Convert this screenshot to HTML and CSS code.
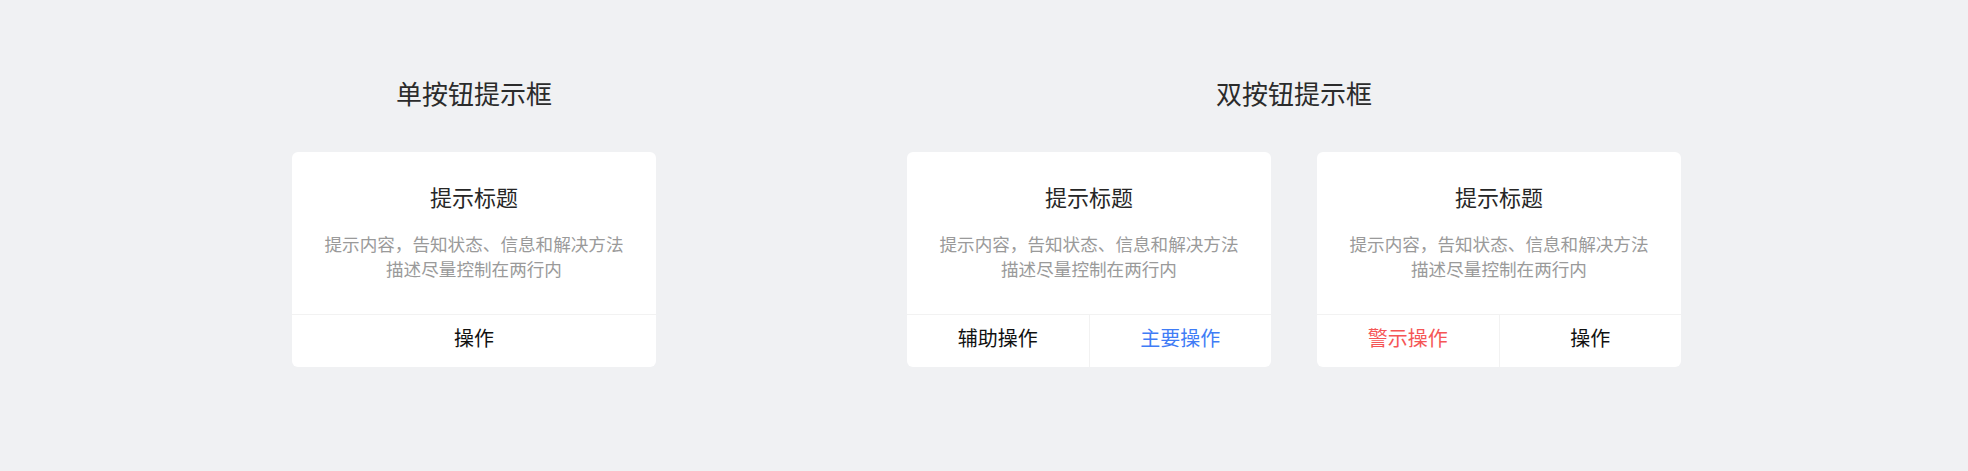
FILE: index.html
```html
<!DOCTYPE html>
<html lang="zh-CN">
<head>
<meta charset="utf-8">
<title>提示框</title>
<link rel="stylesheet" href="styles.css">
</head>
<body>
<main class="page">
  <section class="group">
    <h2 class="group-title">单按钮提示框</h2>
    <div class="cards">
      <div class="dialog">
        <div class="dialog-body">
          <div class="dialog-title">提示标题</div>
          <div class="dialog-desc">提示内容，告知状态、信息和解决方法<br>描述尽量控制在两行内</div>
        </div>
        <div class="dialog-actions">
          <div class="btn">操作</div>
        </div>
      </div>
    </div>
  </section>
  <section class="group">
    <h2 class="group-title">双按钮提示框</h2>
    <div class="cards">
      <div class="dialog">
        <div class="dialog-body">
          <div class="dialog-title">提示标题</div>
          <div class="dialog-desc">提示内容，告知状态、信息和解决方法<br>描述尽量控制在两行内</div>
        </div>
        <div class="dialog-actions">
          <div class="btn">辅助操作</div>
          <div class="btn btn-primary">主要操作</div>
        </div>
      </div>
      <div class="dialog">
        <div class="dialog-body">
          <div class="dialog-title">提示标题</div>
          <div class="dialog-desc">提示内容，告知状态、信息和解决方法<br>描述尽量控制在两行内</div>
        </div>
        <div class="dialog-actions">
          <div class="btn btn-danger">警示操作</div>
          <div class="btn">操作</div>
        </div>
      </div>
    </div>
  </section>
</main>
</body>
</html>
```
FILE: styles.css
```css
* { box-sizing: border-box; }
html, body {
  margin: 0;
  padding: 0;
  background: #f0f1f3;
  font-family: "Noto Sans CJK SC", "Noto Sans", sans-serif;
  text-spacing-trim: space-all;
}
.page {
  display: flex;
  align-items: flex-start;
  gap: 251px;
  padding: 75px 0 0 292px;
  width: 1968px;
  height: 471px;
}
.group {
  display: flex;
  flex-direction: column;
  align-items: center;
}
.group-title {
  margin: 0 0 41px;
  font-size: 26px;
  line-height: 36px;
  font-weight: 400;
  color: #2b2b2b;
}
.cards {
  display: flex;
  gap: 46px;
}
.dialog {
  width: 364px;
  height: 215px;
  background: #fff;
  border-radius: 6px;
  display: flex;
  flex-direction: column;
  overflow: hidden;
}
.dialog-body {
  height: 162px;
  padding-top: 29px;
  text-align: center;
}
.dialog-title {
  font-size: 22px;
  line-height: 30px;
  color: #262626;
}
.dialog-desc {
  margin-top: 20px;
  font-size: 17.6px;
  line-height: 25px;
  color: #9a9a9a;
}
.dialog-actions {
  flex: 1;
  display: flex;
  border-top: 1px solid #f2f2f2;
}
.btn {
  flex: 1;
  display: flex;
  align-items: center;
  justify-content: center;
  font-size: 20px;
  color: #111;
  padding-bottom: 8px;
}
.btn + .btn {
  border-left: 1px solid #f2f2f2;
}
.btn-primary { color: #3f7cf6; }
.btn-danger { color: #f55656; }
```
